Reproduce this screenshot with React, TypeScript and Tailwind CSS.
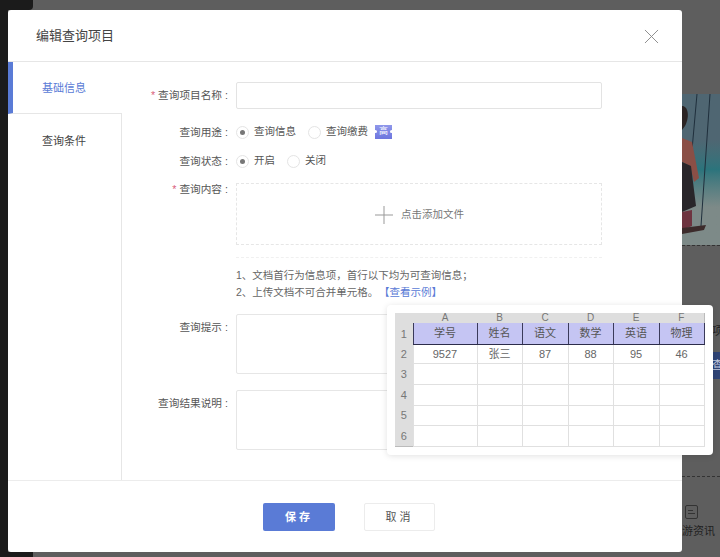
import { X } from "lucide-react";

const cjk = "font-['Liberation_Sans','Noto_Sans_CJK_SC',sans-serif]";

const columns = [
  { name: "A", w: "w-[64px]" },
  { name: "B", w: "w-[45px]" },
  { name: "C", w: "w-[46px]" },
  { name: "D", w: "w-[45px]" },
  { name: "E", w: "w-[46px]" },
  { name: "F", w: "w-[45px]" },
];
const headers = ["学号", "姓名", "语文", "数学", "英语", "物理"];
const sample = ["9527", "张三", "87", "88", "95", "46"];
const rowHeights = ["h-[21px]", "h-[21px]", "h-[20px]", "h-[21px]"];

function Radio({ on, label }: { on?: boolean; label: string }) {
  return (
    <span className="flex items-center gap-[5px]">
      <span className="flex size-[13px] items-center justify-center rounded-full border border-[#e4e4e4]">
        {on && <span className="size-[5px] rounded-full bg-[#777777]" />}
      </span>
      <span>{label}</span>
    </span>
  );
}

function Label({ text, required, className }: { text: string; required?: boolean; className?: string }) {
  return (
    <div className={`flex w-[100px] shrink-0 justify-end gap-[3px] pr-[8px] text-[10.67px] whitespace-nowrap ${className ?? ""}`}>
      {required && <span className="text-[#d9607a]">*</span>}
      <span>{text}</span>
      <span>:</span>
    </div>
  );
}

function SampleSheet() {
  return (
    <table className="w-[309px] table-fixed border-collapse border-r border-b border-[#bbbbbb] text-[11px] text-[#666666]">
      <thead>
        <tr className="h-[10px] bg-[#dedede] text-[10px] leading-[10px] text-[#777777]">
          <th className="w-[18px] font-normal" />
          {columns.map((c) => (
            <th key={c.name} className={`${c.w} font-normal`}>{c.name}</th>
          ))}
        </tr>
      </thead>
      <tbody>
        <tr className="h-[21px] bg-[#c5c5f3] text-[#555555]">
          <td className="bg-[#dedede] pt-px text-center text-[11px] text-[#777777]">1</td>
          {headers.map((h) => (
            <td key={h} className="border-x border-b border-x-[#3a3a5a] border-b-[#2c2c4a] text-center">{h}</td>
          ))}
        </tr>
        <tr className="h-[19px]">
          <td className="bg-[#dedede] pt-px text-center text-[11px] text-[#777777]">2</td>
          {sample.map((s) => (
            <td key={s} className="border border-[#e0e0e0] pt-px text-center">{s}</td>
          ))}
        </tr>
        {rowHeights.map((h, i) => (
          <tr key={i} className={h}>
            <td className="bg-[#dedede] pt-px text-center text-[11px] text-[#777777]">{i + 3}</td>
            {columns.map((c) => (
              <td key={c.name} className="border border-[#e0e0e0]" />
            ))}
          </tr>
        ))}
      </tbody>
    </table>
  );
}

function Backdrop() {
  return (
    <div className="absolute inset-0 bg-[#5e5e5e]">
      <div className="absolute top-0 left-0 h-[557px] w-[8px] bg-[#1b1b1b]" />
      <div className="absolute top-0 left-0 h-[10px] w-[33px] rounded-br-[4px] bg-[#1b1b1b]" />
      <div className="absolute bottom-0 left-0 h-[5px] w-[33px] bg-[#1b1b1b]" />
      <div className="absolute top-[94px] right-0 h-[151px] w-[38px] bg-gradient-to-b from-[#4f6672] from-30% via-[#2b747c] via-50% to-[#7d8a88] to-75%">
        <svg viewBox="0 0 38 151" className="size-full">
          <path d="M15 0 L10 56 M28 0 L19 132" stroke="#1f2f3c" strokeWidth="1" fill="none" />
          <path d="M0 12 C6 12 8 22 3 32 L0 36 Z" fill="#2b2424" />
          <path d="M0 44 L10 48 L17 84 L12 88 L8 72 L0 68 Z" fill="#8a4f46" />
          <path d="M0 68 L9 72 L14 112 L0 118 Z" fill="#29262a" />
          <path d="M0 118 L10 116 L10 132 L0 136 Z" fill="#6e3440" />
          <path d="M0 134 L24 131 L22 136 L0 140 Z" fill="#3c2b2b" />
        </svg>
      </div>
      <div className="absolute top-[245px] right-0 w-[38px] border-t border-dashed border-[#333333]" />
      <div className={`absolute top-[323px] left-[712px] text-[11px] text-[#222222] ${cjk}`}>项</div>
      <div className="absolute top-[352px] left-[712px] flex h-[27px] w-[8px] items-center bg-[#2f4475] text-[11px] text-[#c5cde0]">
        <span className={cjk}>查</span>
      </div>
      <div className="absolute top-[476px] right-0 w-[38px] border-t border-dashed border-[#333333]" />
      <div className="absolute top-[505px] left-[685px] flex h-[14px] w-[13px] flex-col justify-center gap-[2px] rounded-[2px] border border-[#333333] px-[2px]">
        <span className="h-px w-[5px] bg-[#333333]" />
        <span className="h-px w-[7px] bg-[#333333]" />
      </div>
      <div className={`absolute top-[523px] left-[682px] text-[11px] text-[#222222] ${cjk}`}>游资讯</div>
    </div>
  );
}

export default function App() {
  return (
    <div className={`relative h-[557px] w-[720px] overflow-hidden text-[10.5px] text-[#555555] ${cjk}`}>
      <Backdrop />

      <div className="absolute top-[10px] left-[8px] flex h-[542px] w-[674px] flex-col rounded-[3px] bg-white">
        <header className="flex h-[52px] shrink-0 items-center justify-between border-b border-[#e6e6e6] pt-px pr-[18px] pl-[28px]">
          <h2 className="text-[13px] font-normal text-[#444444]">编辑查询项目</h2>
          <X className="size-[25px] text-[#888888]" strokeWidth={0.9} />
        </header>

        <div className="flex min-h-0 flex-1">
          <aside className="w-[114px] shrink-0 text-[11px]">
            <div className="flex h-[52px] border-b border-[#e6e6e6] border-l-[5px] border-l-[#5a7bd6] pt-[19px] pl-[29px] leading-[14px] text-[#5a7bd6]">
              基础信息
            </div>
            <div className="flex h-[367px] border-r border-[#e6e6e6] pt-[20px] pl-[34px] leading-[14px] text-[#444444]">
              查询条件
            </div>
          </aside>

          <form className="flex-1 pt-[20px] pl-[14px]">
            <div className="flex">
              <Label text="查询项目名称" required className="pt-[5px]" />
              <div className="h-[27px] w-[366px] rounded-[2px] border border-[#e3e3e3]" />
            </div>

            <div className="mt-[15px] flex h-[16px] items-center">
              <Label text="查询用途" />
              <div className="flex items-center">
                <div className="w-[72px]"><Radio on label="查询信息" /></div>
                <Radio label="查询缴费" />
                <span className="relative ml-[7px] flex h-[14px] w-[17px] items-center justify-center bg-gradient-to-b from-[#8f97ea] to-[#6d75de] text-[9px] text-white">
                  高
                  <span className="absolute top-[5px] -left-px size-[3px] rounded-full bg-white" />
                  <span className="absolute top-[5px] -right-px size-[3px] rounded-full bg-white" />
                </span>
              </div>
            </div>

            <div className="mt-[13px] flex h-[16px] items-center">
              <Label text="查询状态" />
              <div className="flex items-center">
                <div className="w-[51px]"><Radio on label="开启" /></div>
                <Radio label="关闭" />
              </div>
            </div>

            <div className="mt-[14px] flex">
              <Label text="查询内容" required className="-mt-[2px]" />
              <div>
                <div className="flex h-[62px] w-[366px] items-center justify-center gap-[8px] border border-dashed border-[#e6e6e6] pt-[1px] pl-[1px] text-[#777777]">
                  <svg viewBox="0 0 18 18" className="size-[18px]" stroke="#999999" strokeWidth="1" fill="none">
                    <path d="M9 0 V18 M0 9 H18" />
                  </svg>
                  <span>点击添加文件</span>
                </div>
                <div className="mt-[12px] w-[366px] border-t border-dashed border-[#f0f0f0]" />
                <p className="mt-[9px] leading-[17px] text-[#666666]">1、文档首行为信息项，首行以下均为可查询信息；</p>
                <p className="leading-[17px] text-[#666666]">
                  2、上传文档不可合并单元格。<span className="ml-[6px] text-[#5a7bd6]">【查看示例】</span>
                </p>
              </div>
            </div>

            <div className="mt-[13px] flex">
              <Label text="查询提示" className="pt-[5px]" />
              <div className="h-[60px] w-[366px] rounded-[2px] border border-[#e6e6e6]" />
            </div>

            <div className="mt-[16px] flex">
              <Label text="查询结果说明" className="pt-[5px]" />
              <div className="h-[60px] w-[366px] rounded-[2px] border border-[#e6e6e6]" />
            </div>
          </form>
        </div>

        <footer className="flex h-[72px] shrink-0 items-center justify-center gap-[29px] border-t border-[#ececec] pt-[1px] pl-[8px]">
          <button className="h-[28px] w-[72px] rounded-[2px] bg-[#5a7bd6] text-[11px] font-bold tracking-[3px] text-white">保存</button>
          <button className="h-[28px] w-[71px] rounded-[2px] border border-[#ececec] bg-white text-[11px] tracking-[3px] text-[#555555]">取消</button>
        </footer>
      </div>

      <div className="absolute top-[305px] left-[387px] rounded-[4px] bg-white p-[8px] shadow-[0_1px_6px_rgba(0,0,0,0.12)]">
        <SampleSheet />
      </div>
    </div>
  );
}
